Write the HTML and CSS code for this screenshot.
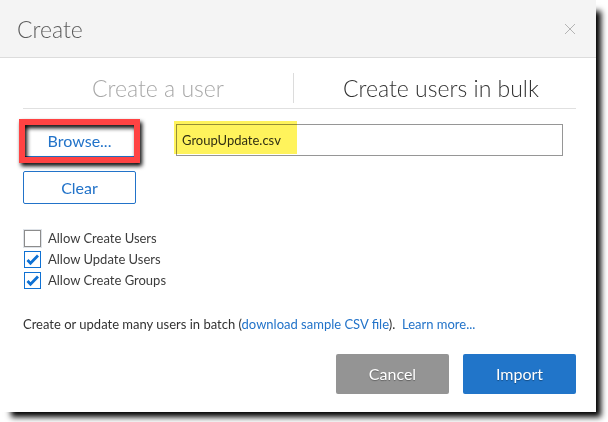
FILE: index.html
```html
<!DOCTYPE html>
<html lang="en">
<head>
<meta charset="utf-8">
<title>Create</title>
<link rel="stylesheet" href="styles.css">
</head>
<body>
<main class="dialog">
  <header class="dialog-header">
    <h1>Create</h1>
    <button class="close" type="button" aria-label="Close">
      <svg viewBox="0 0 12 12" width="12" height="12"><path d="M1 1 11 11M11 1 1 11"/></svg>
    </button>
  </header>
  <form class="dialog-body">
    <nav class="tabs">
      <button class="tab" type="button">Create a user</button>
      <button class="tab tab-active" type="button">Create users in bulk</button>
    </nav>
    <div class="file-row">
      <div class="file-actions">
        <div class="framed"><button class="outline" type="button">Browse...</button></div>
        <button class="outline" type="button">Clear</button>
      </div>
      <div class="file-name">
        <input type="text" value="GroupUpdate.csv" aria-label="File name">
      </div>
    </div>
    <div class="options">
      <label class="focused"><input type="checkbox"><span>Allow Create Users</span></label>
      <label><input type="checkbox" checked><span>Allow Update Users</span></label>
      <label><input type="checkbox" checked><span>Allow Create Groups</span></label>
    </div>
    <p class="hint">Create or update many users in batch (<a href="#">download sample CSV file</a>).&nbsp; <a href="#">Learn more...</a></p>
    <footer class="dialog-footer">
      <button class="solid cancel" type="button">Cancel</button>
      <button class="solid import" type="submit">Import</button>
    </footer>
  </form>
</main>
</body>
</html>
```
FILE: styles.css
```css
* { box-sizing: border-box; }

body {
  margin: 0;
  padding: 0 12px 10px 0;
  background: #fff;
  color: #323232;
  font: 13px/20px Lato, sans-serif;
}

button, input { font: inherit; margin: 0; }
button { padding: 0; border: 0; background: none; }

.dialog {
  background: #fff;
  box-shadow: 8px 8px 6px -3px #000;
}

.dialog-header {
  display: flex;
  align-items: center;
  justify-content: space-between;
  height: 58px;
  padding: 0 20px 0 17px;
  background: #f4f4f4;
  border-bottom: 1px solid #dcdcdc;
}

h1 {
  margin: 0;
  color: #5c5c5c;
  font-size: 23px;
  font-weight: 300;
  line-height: 32px;
}

.close { width: 12px; height: 12px; }
.close svg { display: block; fill: none; stroke: #b4b4b4; }

.dialog-body { padding: 15px 20px 18px 23px; }

.tabs {
  display: grid;
  grid-template-columns: 270fr 283fr;
  padding-bottom: 5px;
  border-bottom: 1px solid #e0e0e0;
}

.tab {
  height: 30px;
  color: #a8a8a8;
  font-size: 23px;
  font-weight: 300;
  line-height: 28px;
}

.tab-active {
  border-left: 1px solid #dcdcdc;
  padding-left: 12px;
  color: #323232;
}

.file-row {
  display: flex;
  gap: 40px;
  padding: 15px 13px 0 0;
}

.file-actions {
  display: grid;
  gap: 14px;
  width: 113px;
}

.framed { position: relative; }

.framed::after {
  content: "";
  position: absolute;
  inset: -5px -4px -6px;
  border: 6px solid #ff4343;
  filter: drop-shadow(2px 3px 2px #000);
  pointer-events: none;
}

.outline {
  display: block;
  width: 100%;
  height: 33px;
  border: 1px solid #2273c9;
  border-radius: 2px;
  color: #2273c9;
  font-size: 16px;
  line-height: 30px;
}

.file-name {
  position: relative;
  flex: 1;
}

.file-name input {
  display: block;
  width: 100%;
  height: 32px;
  padding: 0 5px;
  border: 1px solid #969696;
  background: #fff;
  color: #323232;
}

.file-name::after {
  content: "";
  position: absolute;
  top: -3px;
  left: -2px;
  width: 123px;
  height: 33px;
  background: #fff35c;
  mix-blend-mode: multiply;
  pointer-events: none;
}

.options {
  display: grid;
  gap: 3px;
  padding: 25px 0 0 1px;
}

.options label {
  display: flex;
  align-items: center;
  gap: 7px;
  height: 18px;
  color: #3c3c3c;
  line-height: 18px;
}

.options input {
  appearance: none;
  width: 17px;
  height: 17px;
  border: 1px solid #8c8c8c;
  background: #fff;
}

.options .focused input { box-shadow: 0 0 0 1px #dfe3e8; }

.options input:checked {
  border-color: #0f71d3;
  background: #fff url("data:image/svg+xml,%3Csvg xmlns='http://www.w3.org/2000/svg' viewBox='0 0 15 15'%3E%3Cpath d='M2.5 8 5.5 11.2 13 3.5' fill='none' stroke='%230f71d3' stroke-width='2.8'/%3E%3C/svg%3E");
}

.hint { margin: 25px 0 20px; }

a { color: #2273c9; text-decoration: none; }

.dialog-footer {
  display: flex;
  justify-content: flex-end;
  gap: 14px;
}

.solid {
  width: 113px;
  height: 40px;
  border-radius: 2px;
  color: #fff;
  font-size: 16px;
  line-height: 40px;
  text-shadow: 0 1px 1px rgba(0, 0, 0, .35);
}

.cancel { background: #949494; }
.import { background: #2175c9; }
```
